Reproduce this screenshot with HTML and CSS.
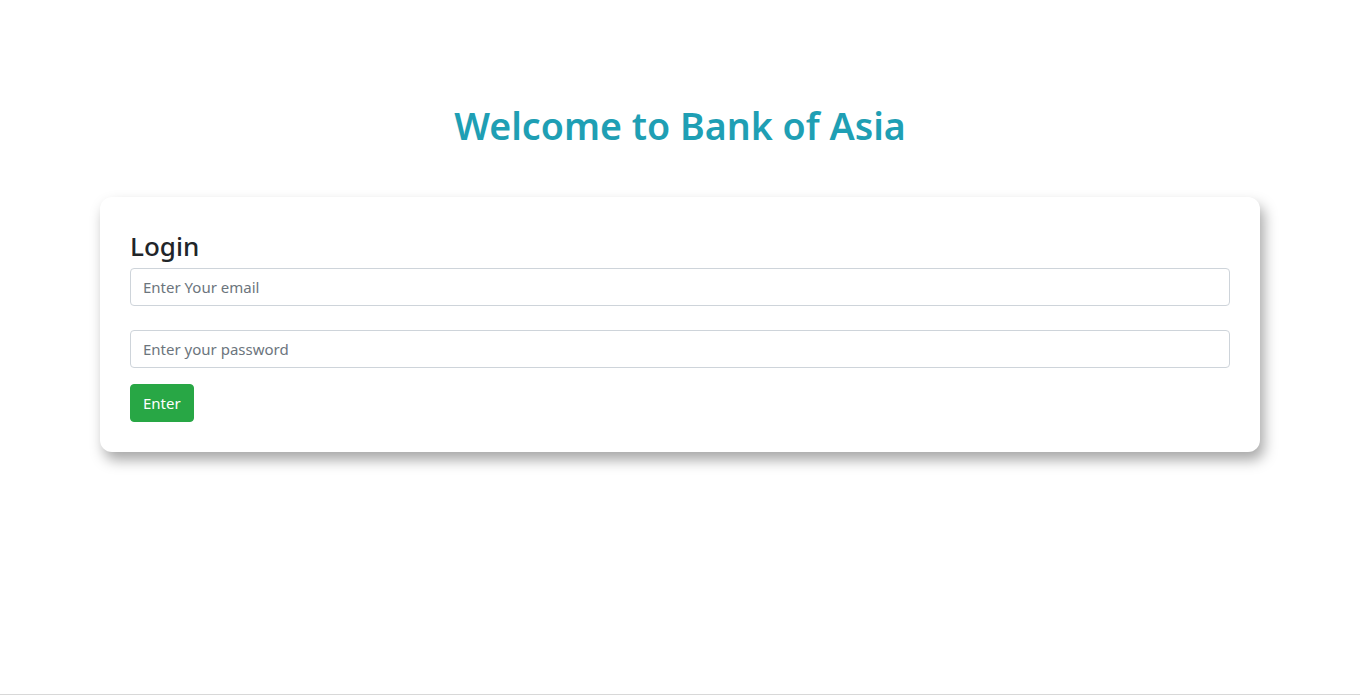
FILE: index.html
```html
<!DOCTYPE html>
<html lang="en">
<head>
<meta charset="utf-8">
<title>Bank of Asia</title>
<link rel="stylesheet" href="styles.css">
</head>
<body>
<main class="page">
  <h1 class="title">Welcome to Bank of Asia</h1>
  <section class="card">
    <h3 class="card-title">Login</h3>
    <form class="form">
      <input class="field" type="email" placeholder="Enter Your email">
      <input class="field" type="password" placeholder="Enter your password">
      <div><button class="btn" type="button">Enter</button></div>
    </form>
  </section>
</main>
<div class="bottom-line"></div>
</body>
</html>
```

FILE: styles.css
```css
* { box-sizing: border-box; }
html, body { margin: 0; padding: 0; background: #fff; }
body {
  font-family: "Noto Sans", "Open Sans", sans-serif;
  color: #212529;
  height: 695px;
  overflow: hidden;
  position: relative;
}
.page {
  padding: 96px 100px 0;
}
.title {
  margin: 0 0 41px;
  text-align: center;
  color: #1f9fb4;
  font-size: 37.6px;
  font-weight: 600;
  line-height: 60px;
}
.card {
  background: #fff;
  border-radius: 12px;
  box-shadow: 4px 8px 14px rgba(0, 0, 0, 0.35);
  padding: 30px;
}
.card-title {
  margin: 0 0 3px;
  font-size: 26px;
  font-weight: 500;
  line-height: 38px;
  color: #212529;
}
.form {
  display: flex;
  flex-direction: column;
  gap: 24px;
}
.form > div { margin-top: -8px; }
.field {
  display: block;
  width: 100%;
  height: 38px;
  padding: 6px 12px;
  font-family: inherit;
  font-size: 15px;
  color: #495057;
  border: 1px solid #ced4da;
  border-radius: 4px;
  background: #fff;
  outline: none;
}
.field::placeholder { color: #6c757d; }
.btn {
  height: 38px;
  padding: 0 12px;
  background: #28a745;
  color: #fff;
  border: 1px solid #28a745;
  border-radius: 4px;
  font-family: inherit;
  font-size: 15px;
}
.bottom-line {
  position: absolute;
  left: 0;
  right: 0;
  bottom: 0;
  height: 1px;
  background: #d8d8d8;
}
```
